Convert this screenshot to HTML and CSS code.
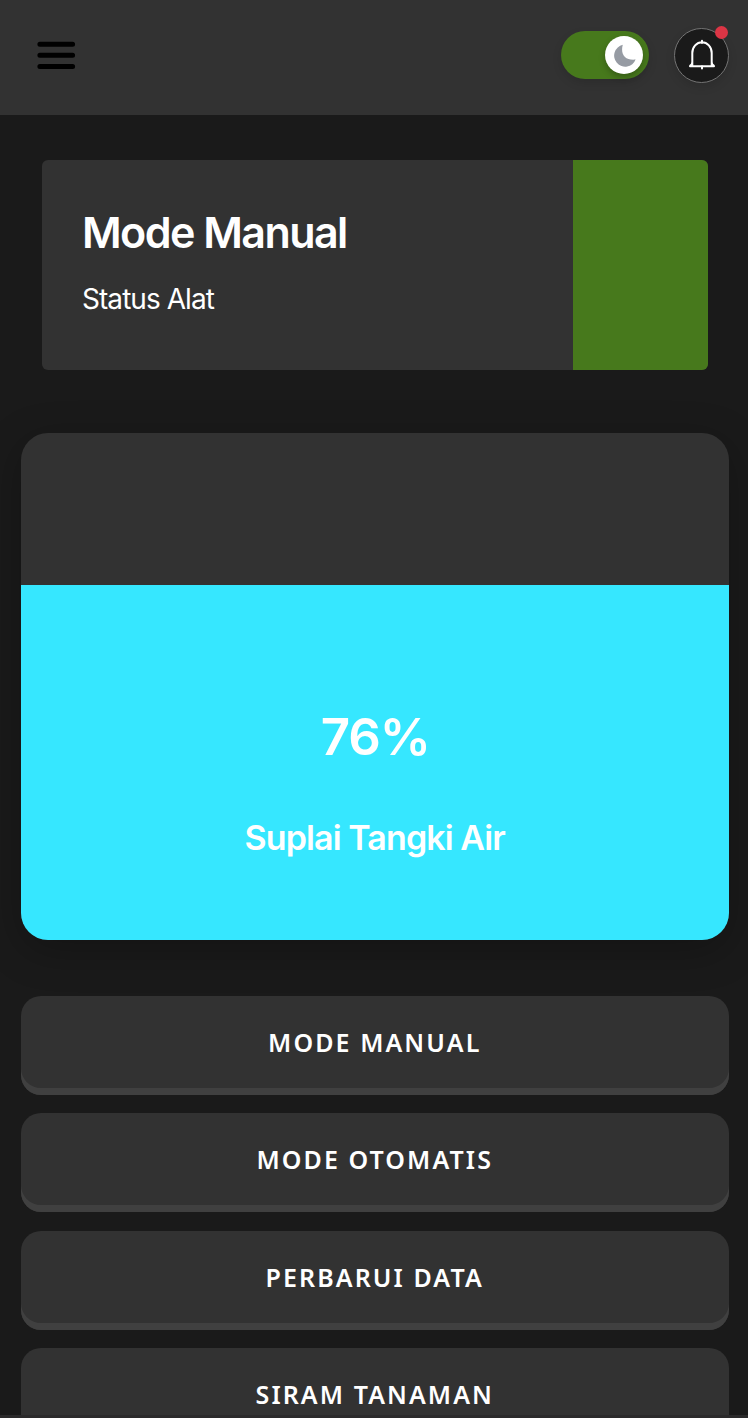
FILE: index.html
```html
<!DOCTYPE html>
<html lang="id">
<head>
<meta charset="utf-8">
<title>Dashboard</title>
<link rel="stylesheet" href="styles.css">
</head>
<body>
<header class="topbar">
  <svg class="menu" viewBox="0 0 40 30" aria-label="Menu"><path d="M3.900 4.300H36.600M3.900 15.300H36.600M3.900 26.400H36.600"/></svg>
  <div class="actions">
    <div class="toggle"><div class="knob">
      <svg viewBox="0 0 24 24"><path d="M10.200 .8A11.600 11.600 0 1 0 23.600 16.300C12.500 17.500 7.500 10.500 10.200 .8Z"/></svg>
    </div></div>
    <div class="bell">
      <svg viewBox="0 0 28 32"><path d="M4.300 26.500V14A9.700 10.700 0 0 1 23.700 14V26.500M2 27.200H26M14 1.800V4M14 27V29.500M4.300 23Q4.300 25.500 2.200 26.600M23.700 23Q23.700 25.500 25.800 26.600"/></svg>
      <span class="dot"></span>
    </div>
  </div>
</header>
<main class="content">
  <section class="status">
    <div class="status-text">
      <h1 class="status-title">Mode Manual</h1>
      <p class="status-label">Status Alat</p>
    </div>
    <div class="status-flag"></div>
  </section>
  <section class="tank">
    <div class="water">
      <div class="percent">76%</div>
      <div class="tank-label">Suplai Tangki Air</div>
    </div>
  </section>
  <div class="buttons">
    <button class="btn">MODE MANUAL</button>
    <button class="btn">MODE OTOMATIS</button>
    <button class="btn">PERBARUI DATA</button>
    <button class="btn">SIRAM TANAMAN</button>
  </div>
</main>
<div class="bottom-edge"></div>
</body>
</html>
```
FILE: styles.css
```css
* { box-sizing: border-box; }
body {
  margin: 0;
  height: 1418px;
  overflow: hidden;
  display: flex;
  flex-direction: column;
  background: #1a1a1a;
  color: #fff;
  font-family: Inter, "Liberation Sans", sans-serif;
}
.topbar {
  flex: none;
  height: 115px;
  padding: 0 19px 5px 36px;
  display: flex;
  align-items: center;
  justify-content: space-between;
  background: #323232;
}
.menu { width: 40px; height: 30px; fill: none; stroke: #000; stroke-width: 5; stroke-linecap: round; }
.actions { display: flex; align-items: center; gap: 25px; }
.toggle {
  width: 88px;
  height: 48px;
  padding: 0 6px 0 0;
  display: flex;
  align-items: center;
  justify-content: flex-end;
  border-radius: 24px;
  background: #47791c;
  box-shadow: 0 4px 10px rgba(0, 0, 0, .12);
}
.knob {
  width: 38px;
  height: 38px;
  display: flex;
  align-items: center;
  justify-content: center;
  border-radius: 50%;
  background: #fff;
  box-shadow: 0 3px 6px rgba(0, 0, 0, .25);
}
.knob svg { width: 23px; height: 23px; fill: #969ba3; }
.bell {
  position: relative;
  width: 55px;
  height: 55px;
  display: flex;
  align-items: center;
  justify-content: center;
  border: 1px solid #747474;
  border-radius: 50%;
  background: #1a1a1a;
  box-shadow: 0 4px 10px rgba(0, 0, 0, .12);
}
.bell svg { width: 28px; height: 32px; fill: none; stroke: #fff; stroke-width: 2; stroke-linecap: round; stroke-linejoin: round; }
.dot { position: absolute; top: -3px; right: 0; width: 13px; height: 13px; border-radius: 50%; background: #dc3545; }
.content { flex: 1; min-height: 0; overflow: hidden; padding: 45px 19.500px 0 21px; }
.status {
  margin: 0 20.500px 0 21px;
  height: 210px;
  display: flex;
  overflow: hidden;
  border-radius: 6px;
  background: #323232;
}
.status-text { flex: 1; padding: 45.500px 0 0 40px; }
.status-title { margin: 0; font-size: 43px; font-weight: 600; line-height: 52px; letter-spacing: -1.550px; white-space: nowrap; }
.status-label { margin: 23px 0 0; font-size: 28px; font-weight: 400; line-height: 36px; letter-spacing: -.95px; white-space: nowrap; }
.status-flag { width: 135px; background: #47791c; }
.tank {
  margin-top: 63px;
  height: 507px;
  display: flex;
  align-items: flex-end;
  overflow: hidden;
  border-radius: 27px;
  background: #323232;
  box-shadow: 0 10px 40px rgba(0, 0, 0, .25);
}
.water { width: 100%; height: 355px; padding-top: 121px; text-align: center; background: #36e7ff; }
.percent { padding-left: 1px; font-size: 51px; font-weight: 600; line-height: 62px; letter-spacing: -1.200px; }
.tank-label { margin-top: 49px; font-size: 34px; font-weight: 600; line-height: 42px; letter-spacing: -.9px; }
.buttons { margin-top: 56px; display: flex; flex-direction: column; gap: 18.300px; }
.btn {
  flex: none;
  height: 99px;
  padding: 0 0 7px;
  border: 0;
  border-radius: 20px;
  background: #323232;
  box-shadow: inset 0 -7px 0 #404040;
  color: #fff;
  font: 600 25px "Noto Sans", sans-serif;
  letter-spacing: 2.080px;
}
.bottom-edge { flex: none; height: 3px; background: #2b2a2b; }
```
